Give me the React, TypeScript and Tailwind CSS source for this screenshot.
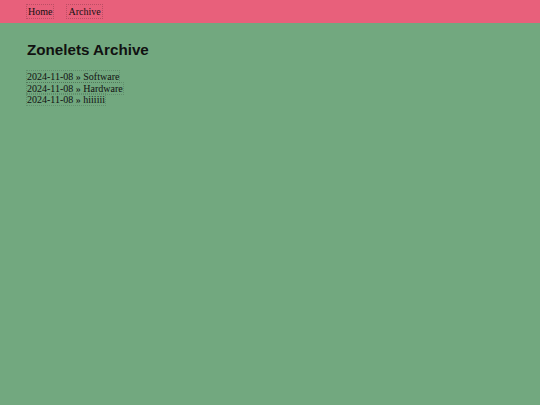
export default function App() {
  const posts = [
    { date: "2024-11-08", title: "Software" },
    { date: "2024-11-08", title: "Hardware" },
    { date: "2024-11-08", title: "hiiiiii" },
  ]

  return (
    <div className="min-h-[405px] bg-[#72a87f] font-['Liberation_Serif',serif] text-[#111]">
      {/* Barra de navegación */}
      <header className="h-[23px] bg-[#e8607b] px-[27px] flex items-center gap-[14px] text-[10px]">
        <a className="px-px outline-1 outline-dotted outline-[#00000030] leading-[13px]">Home</a>
        <a className="px-px outline-1 outline-dotted outline-[#00000030] leading-[13px]">Archive</a>
      </header>

      <main className="px-[27px] pt-[17px]">
        <h1 className="font-['Liberation_Sans',sans-serif] font-bold text-[15.2px] leading-[19px]">
          Zonelets Archive
        </h1>
        <ul className="mt-[12px] text-[10px] leading-[11.5px]">
          {posts.map((post) => (
            <li key={post.title}>
              <a className="outline-1 outline-dotted outline-[#00000026]">
                {post.date} » {post.title}
              </a>
            </li>
          ))}
        </ul>
      </main>
    </div>
  )
}
